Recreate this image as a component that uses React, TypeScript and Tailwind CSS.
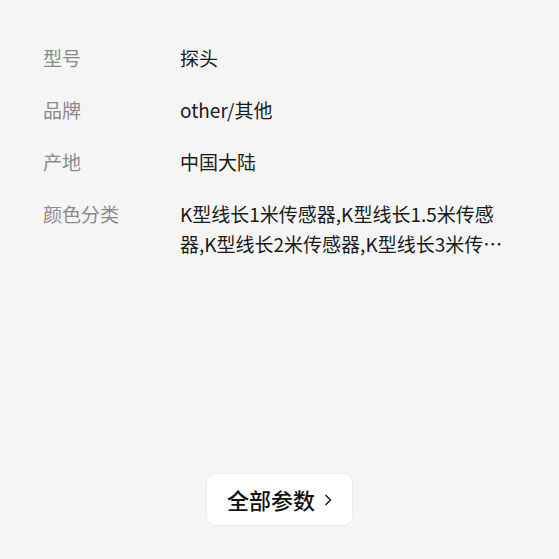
const rows = [
  { label: "型号", value: "探头" },
  { label: "品牌", value: "other/其他" },
  { label: "产地", value: "中国大陆" },
  {
    label: "颜色分类",
    value:
      "K型线长1米传感器,K型线长1.5米传感器,K型线长2米传感器,K型线长3米传感器,K型线长5米传感器",
  },
];

export default function App() {
  return (
    <div
      className="flex h-[559px] flex-col bg-[#f5f5f5]"
      style={{ fontFamily: '"Noto Sans CJK SC", "Noto Sans", sans-serif' }}
    >
      <div className="flex flex-col gap-[22px] pl-[43px] pr-[47px] pt-[43px]">
        {rows.map((r) => (
          <div key={r.label} className="grid grid-cols-[137px_1fr] text-[19px] leading-[30px]">
            <span className="text-[#8a8a8a]">{r.label}</span>
            <span className="line-clamp-2 text-[#1a1a1a]">{r.value}</span>
          </div>
        ))}
      </div>
      <div className="mt-auto mb-[33px] flex justify-center">
        <button className="flex h-[53px] w-[147px] items-center justify-center gap-[9px] rounded-[10px] border border-[#ececec] bg-white text-[22px] font-medium text-[#111]">
          全部参数
          <svg width="8" height="12" viewBox="0 0 8 12" fill="none">
            <path d="M1.5 1 L6.5 6 L1.5 11" stroke="#111" strokeWidth="1.4" />
          </svg>
        </button>
      </div>
    </div>
  );
}
